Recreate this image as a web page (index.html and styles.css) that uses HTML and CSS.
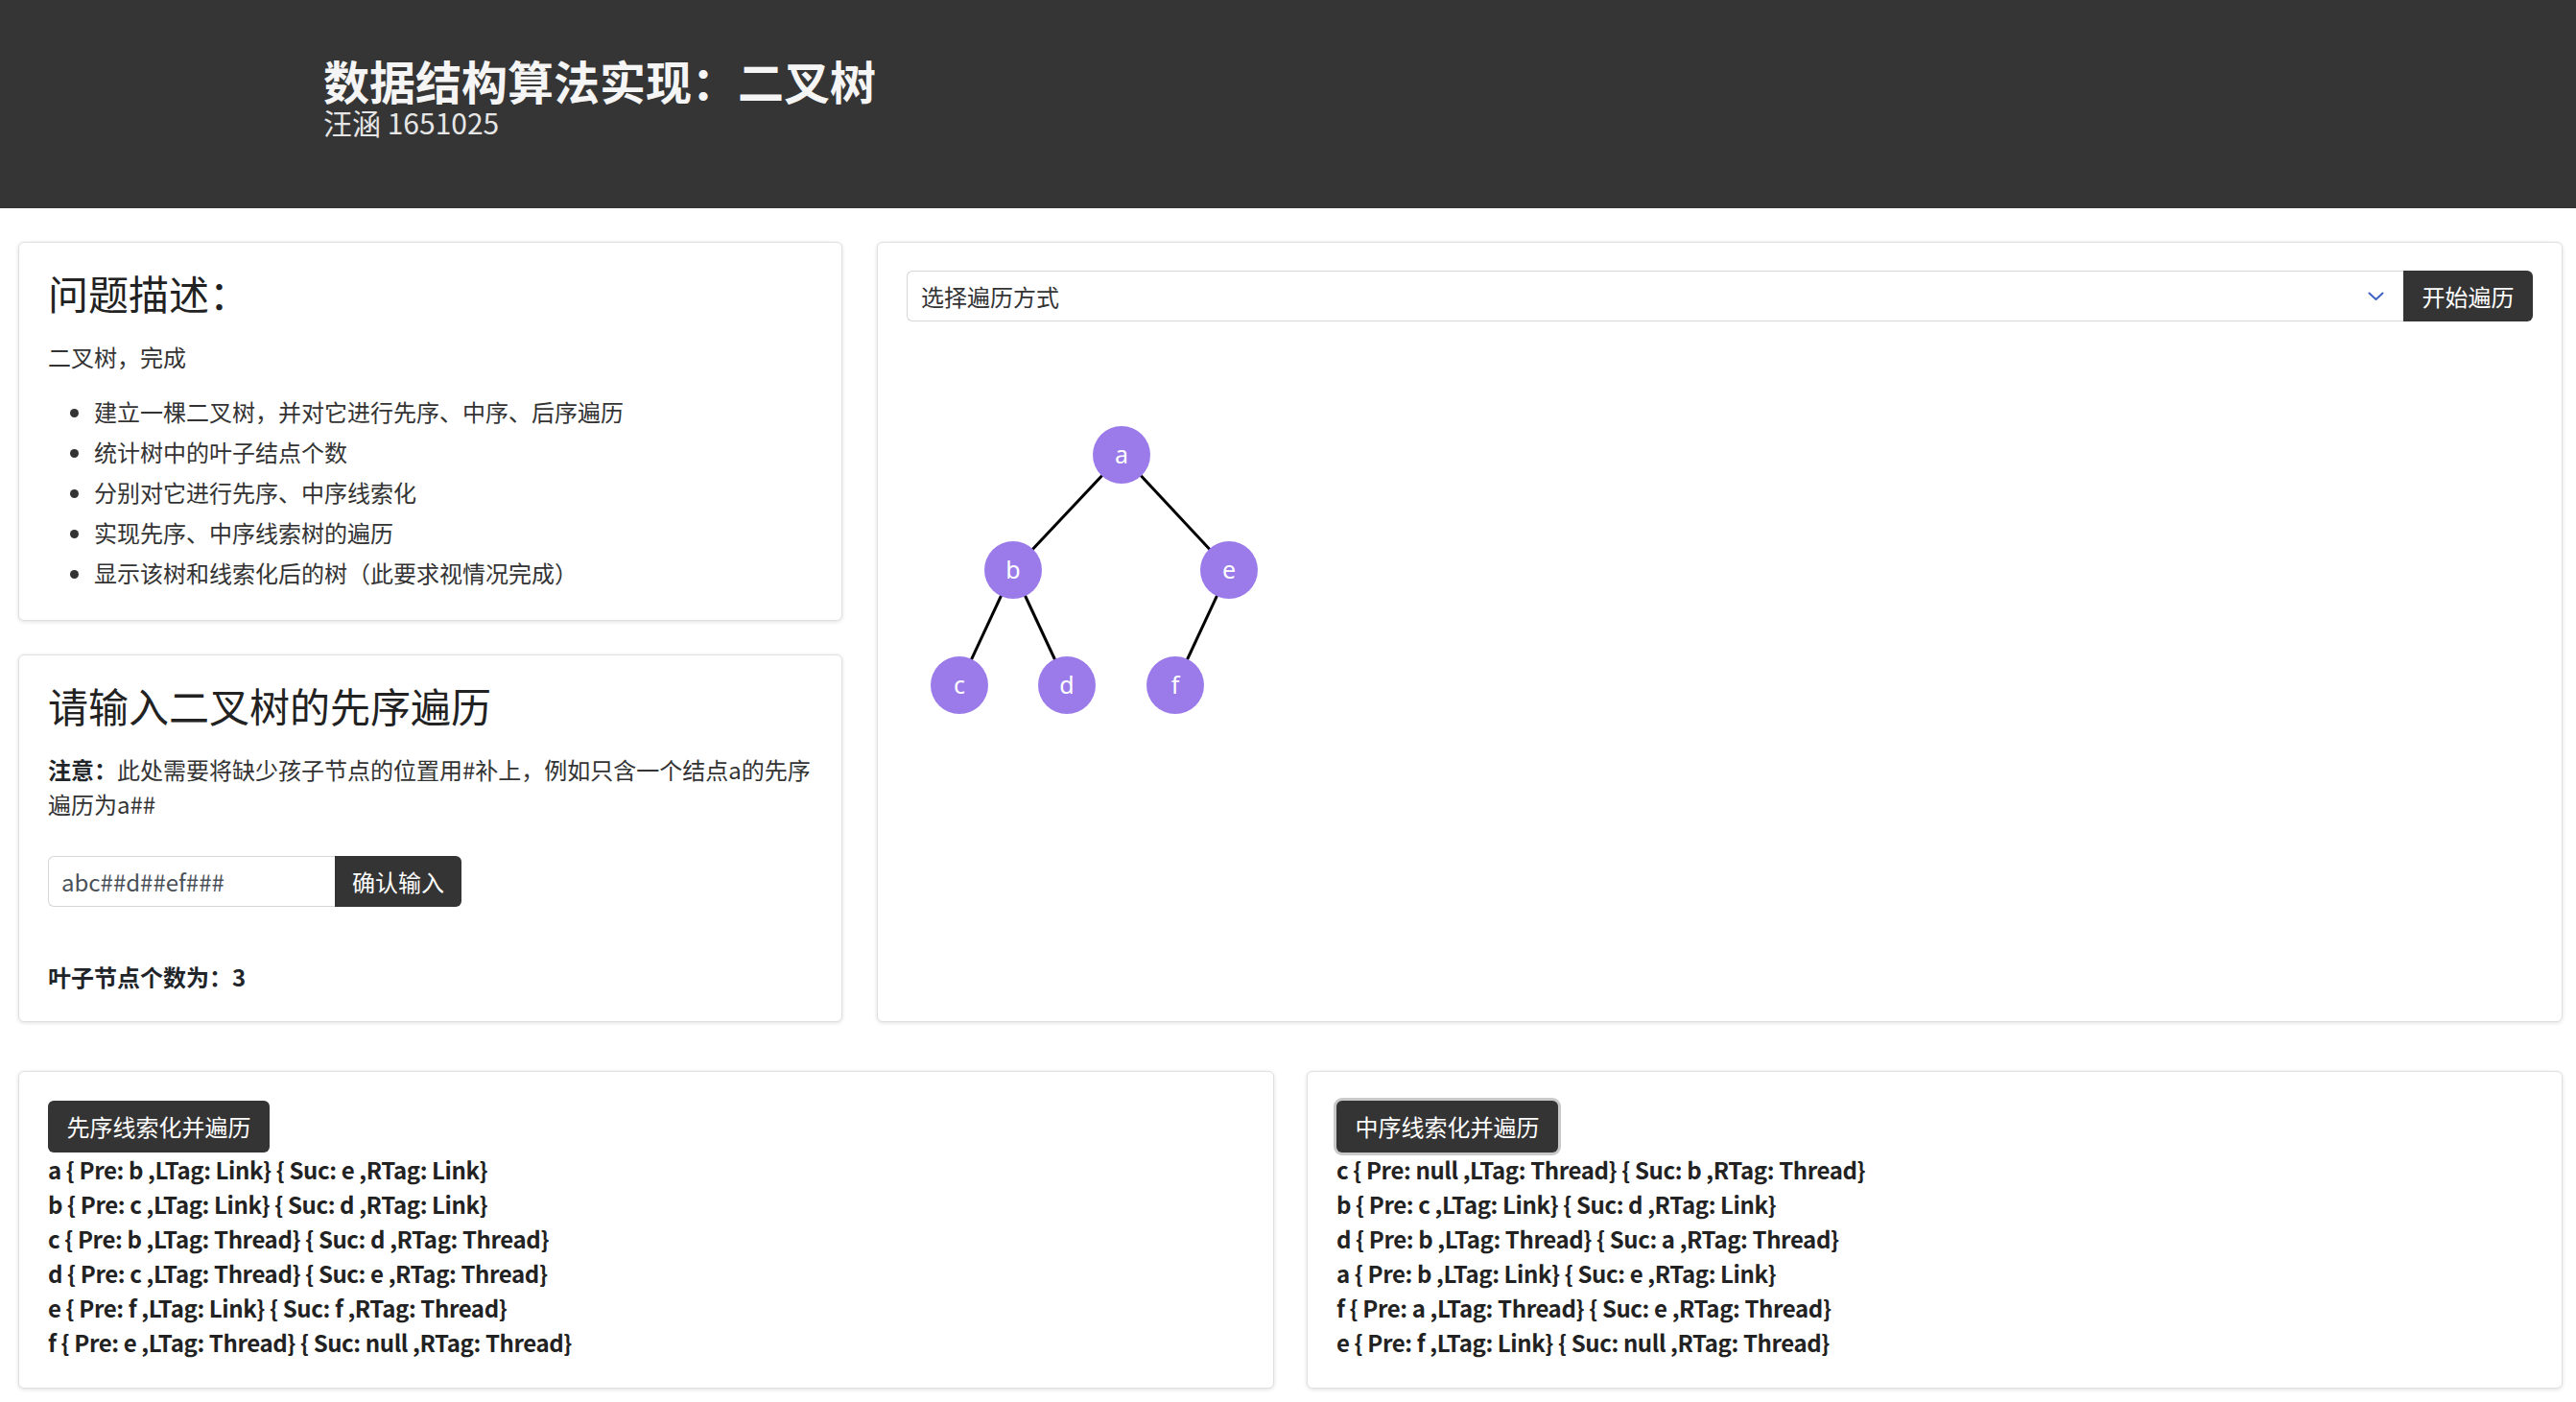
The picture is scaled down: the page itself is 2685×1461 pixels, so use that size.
FILE: index.html
```html
<!DOCTYPE html>
<html lang="zh-CN">
<head>
<meta charset="utf-8">
<title>数据结构算法实现：二叉树</title>
<link rel="stylesheet" href="styles.css">
</head>
<body>
<header class="hero">
  <h1 class="hero-title">数据结构算法实现：二叉树</h1>
  <p class="hero-sub">汪涵 1651025</p>
</header>
<main class="page">
  <section class="row-top">
    <div class="col-left">
      <div class="card card-desc">
        <h3 class="card-title">问题描述：</h3>
        <p class="text">二叉树，完成</p>
        <ul class="tasks">
          <li>建立一棵二叉树，并对它进行先序、中序、后序遍历</li>
          <li>统计树中的叶子结点个数</li>
          <li>分别对它进行先序、中序线索化</li>
          <li>实现先序、中序线索树的遍历</li>
          <li>显示该树和线索化后的树（此要求视情况完成）</li>
        </ul>
      </div>
      <div class="card card-input">
        <h3 class="card-title">请输入二叉树的先序遍历</h3>
        <p class="text note"><strong>注意：</strong>此处需要将缺少孩子节点的位置用#补上，例如只含一个结点a的先序<br>遍历为a##</p>
        <div class="input-group">
          <input class="form-input" type="text" value="abc##d##ef###">
          <button class="btn btn-append">确认输入</button>
        </div>
        <p class="leaf-count">叶子节点个数为：3</p>
      </div>
    </div>
    <div class="card card-tree">
      <div class="input-group select-group">
        <span class="select-wrap">
          <select class="form-select"><option>选择遍历方式</option></select>
          <svg class="chevron" width="17" height="10" viewBox="0 0 17 10"><path d="M1.5 1.5 L8.5 8 L15.5 1.5" fill="none" stroke="#3d63c6" stroke-width="2" stroke-linecap="round" stroke-linejoin="round"/></svg>
        </span>
        <button class="btn btn-append">开始遍历</button>
      </div>
      <svg class="tree" width="420" height="420" viewBox="0 0 420 420">
        <g stroke="#000" stroke-width="3">
          <line x1="224" y1="119" x2="111" y2="239"/>
          <line x1="224" y1="119" x2="336" y2="239"/>
          <line x1="111" y1="239" x2="55" y2="359"/>
          <line x1="111" y1="239" x2="167" y2="359"/>
          <line x1="336" y1="239" x2="280" y2="359"/>
        </g>
        <g fill="#9b7be9">
          <circle cx="224" cy="119" r="30"/>
          <circle cx="111" cy="239" r="30"/>
          <circle cx="336" cy="239" r="30"/>
          <circle cx="55" cy="359" r="30"/>
          <circle cx="167" cy="359" r="30"/>
          <circle cx="280" cy="359" r="30"/>
        </g>
        <g class="node-label" fill="#fff" text-anchor="middle">
          <text x="224" y="128">a</text>
          <text x="111" y="248">b</text>
          <text x="336" y="248">e</text>
          <text x="55" y="368">c</text>
          <text x="167" y="368">d</text>
          <text x="280" y="368">f</text>
        </g>
      </svg>
    </div>
  </section>
  <section class="row-bottom">
    <div class="card card-thread">
      <button class="btn btn-block">先序线索化并遍历</button>
      <div class="thread-list">
        <div>a { Pre: b ,LTag: Link} { Suc: e ,RTag: Link}</div>
        <div>b { Pre: c ,LTag: Link} { Suc: d ,RTag: Link}</div>
        <div>c { Pre: b ,LTag: Thread} { Suc: d ,RTag: Thread}</div>
        <div>d { Pre: c ,LTag: Thread} { Suc: e ,RTag: Thread}</div>
        <div>e { Pre: f ,LTag: Link} { Suc: f ,RTag: Thread}</div>
        <div>f { Pre: e ,LTag: Thread} { Suc: null ,RTag: Thread}</div>
      </div>
    </div>
    <div class="card card-thread">
      <button class="btn btn-block btn-focus">中序线索化并遍历</button>
      <div class="thread-list">
        <div>c { Pre: null ,LTag: Thread} { Suc: b ,RTag: Thread}</div>
        <div>b { Pre: c ,LTag: Link} { Suc: d ,RTag: Link}</div>
        <div>d { Pre: b ,LTag: Thread} { Suc: a ,RTag: Thread}</div>
        <div>a { Pre: b ,LTag: Link} { Suc: e ,RTag: Link}</div>
        <div>f { Pre: a ,LTag: Thread} { Suc: e ,RTag: Thread}</div>
        <div>e { Pre: f ,LTag: Link} { Suc: null ,RTag: Thread}</div>
      </div>
    </div>
  </section>
</main>
</body>
</html>
```
FILE: styles.css
```css
* { box-sizing: border-box; }

html, body {
  margin: 0;
  padding: 0;
  background: #fff;
}

body {
  font-family: "Noto Sans CJK SC", "Noto Sans", sans-serif;
  font-size: 24px;
  line-height: 36px;
  color: #212529;
}

.hero {
  height: 217px;
  background: #353535;
  color: #f5f5f5;
  padding: 59px 0 0 337px;
}

.hero-title {
  margin: 0;
  font-size: 48px;
  line-height: 48px;
  font-weight: 700;
}

.hero-sub {
  margin: 2px 0 0;
  font-size: 30px;
  line-height: 36px;
  font-weight: 400;
  color: #e6e6e6;
}

.page {
  padding: 35px 14px 14px 19px;
}

.row-top {
  display: grid;
  grid-template-columns: 859px 1fr;
  column-gap: 36px;
}

.col-left {
  display: flex;
  flex-direction: column;
  gap: 35px;
}

.row-bottom {
  margin-top: 51px;
  display: grid;
  grid-template-columns: 1fr 1fr;
  column-gap: 34px;
}

.card {
  background: #fff;
  border: 1px solid #e0e0e0;
  border-radius: 6px;
  box-shadow: 0 1px 4px rgba(0, 0, 0, 0.13);
  padding: 27px 30px 30px;
}

.card-desc { height: 395px; }
.card-input { height: 383px; }
.card-tree { height: 813px; padding-top: 29px; }
.card-thread { height: 331px; padding-top: 30px; }

.card-title {
  margin: 0 0 24px;
  font-size: 42px;
  line-height: 50px;
  font-weight: 400;
  color: #222;
}

.text {
  margin: 0 0 18px;
  line-height: 36px;
  color: #333;
}

.tasks {
  margin: 0;
  padding-left: 48px;
  color: #333;
}

.tasks li {
  line-height: 42px;
}

.note strong { font-weight: 700; color: #212529; }

.card-input .note { margin-bottom: 36px; }

.input-group {
  display: flex;
  height: 53px;
}

.form-input {
  width: 299px;
  height: 53px;
  border: 1px solid #d6d6d6;
  border-right: none;
  border-radius: 6px 0 0 6px;
  padding: 0 13px;
  font: inherit;
  font-size: 24px;
  color: #495057;
  background: #fff;
  outline: none;
}

.btn {
  font: inherit;
  font-size: 24px;
  line-height: 36px;
  color: #fff;
  background: #343434;
  border: 0;
  border-radius: 6px;
  padding: 0 18px;
  cursor: pointer;
}

.btn-append {
  height: 53px;
  border-radius: 0 6px 6px 0;
}

.leaf-count {
  margin: 55px 0 0;
  font-weight: 700;
  line-height: 36px;
}

.select-group { width: 100%; }

.select-wrap {
  position: relative;
  flex: 1;
  display: block;
}

.form-select {
  -webkit-appearance: none;
  appearance: none;
  width: 100%;
  height: 53px;
  border: 1px solid #d6d6d6;
  border-right: none;
  border-radius: 6px 0 0 6px;
  padding: 0 14px;
  font: inherit;
  font-size: 24px;
  color: #333;
  background: #fff;
  outline: none;
}

.chevron {
  position: absolute;
  right: 20px;
  top: 22px;
  pointer-events: none;
}

.select-group .btn-append { width: 135px; padding: 0; }

.tree {
  display: block;
  margin-top: 20px;
}

.node-label {
  font-family: "Noto Sans", "Open Sans", sans-serif;
  font-size: 25px;
}

.btn-block {
  display: block;
  height: 54px;
  width: 231px;
  padding: 0;
  margin-bottom: 0;
}

.btn-focus {
  box-shadow: 0 0 0 3px #c9c9c9;
}

.thread-list {
  font-weight: 700;
  line-height: 36px;
  letter-spacing: -0.4px;
  color: #222;
}
```
